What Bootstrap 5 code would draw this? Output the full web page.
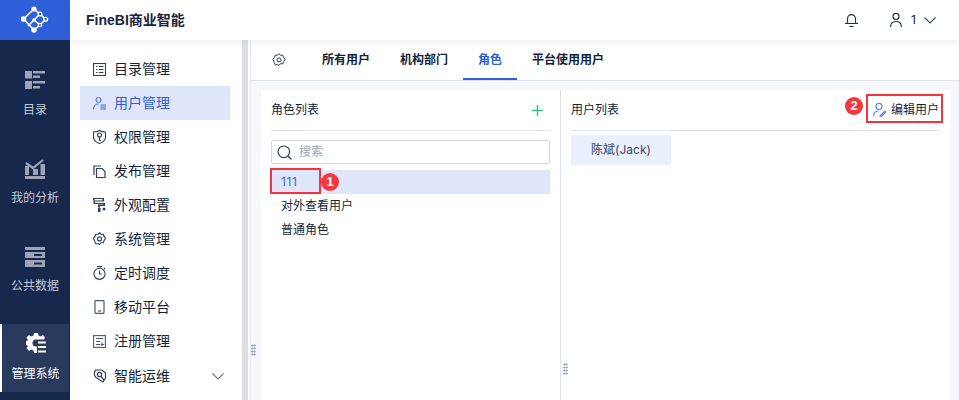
<!doctype html>
<html lang="zh"><head><meta charset="utf-8"><title>FineBI</title>
<link href="https://cdn.jsdelivr.net/npm/bootstrap@5.3.0/dist/css/bootstrap.min.css" rel="stylesheet">
<style>
html,body{height:400px;overflow:hidden}
body{font-family:"Inter","Noto Sans CJK SC",sans-serif;font-size:12px;color:#141f3c;background:#fff;--blue:#2f5fd9}
svg{display:block;flex:none}
.shell{width:959px;height:400px}
.rail{width:70px;background:#17284d;color:#c3c9d6}
.logo-cell{height:40px;background:var(--blue)}
.rail-list{padding-top:20px;gap:20px}
.rail-item{height:68px;gap:11px;padding-top:11px;font-size:12px;line-height:16px}
.rail-glyph{height:20px}
.rail-item.on{background:#2a3a5f;color:#fff;border-left:2px solid #fff;margin-right:1px;padding-top:9px;gap:13px}
.topbar{height:40px;padding-left:16px;padding-right:23px;box-shadow:0 2px 8px rgba(40,50,90,.09);z-index:2;position:relative}
.brand{font-family:"Liberation Sans","Noto Sans CJK SC",sans-serif;font-size:14px;font-weight:700;color:#1a2440}
.bell-gap{margin-left:32px;margin-right:9px}
.bell-shift{margin-right:0}
.side{width:172px;padding:12px 0 0 10px}
.side-item{width:150px;height:34px;padding-left:13px;gap:8px;font-size:14px}
.side-item span{padding-bottom:2px}
.side-item.on{background:#e0e6f9;color:var(--blue)}
.side-last{margin-top:1px}
.chev{margin-left:auto;margin-right:6px}
.scroller{width:6px;margin-right:2px;background:#dddfe6}
.workspace{background:#f6f8fc;border-left:1px solid #e6e8ef}
.grip{width:10px;background:#f6f8fc;position:relative}
.dots{position:absolute;width:5px;height:12px;background-image:radial-gradient(#8a93ab .8px,transparent .9px);background-size:2.5px 3px}
.dots-a{left:0;top:254px}
.dots-b{left:2px;top:273px}
.tabs{height:41px;background:#fff;border-bottom:1px solid #dfe2ec;padding-left:21px}
.tab{height:40px;padding:0 15px;font-size:12px;font-weight:600;line-height:40px}
.tabs svg{margin-right:21px}
.tab.on{color:var(--blue);border-bottom:2px solid var(--blue)}
.panels{padding:9px 9px 0 0}
.pane-a{width:300px;padding:0 10px;position:relative;border-right:1px solid #dfe2ec}
.pane-b{flex:1;padding:0 10px;position:relative}
.pane-head{height:41px;border-bottom:1px solid #dfe2ec;font-size:12px}
.plus{margin-right:7px}
.edit-link{gap:5px;margin-right:1px}
.finder{height:24px;margin-top:9px;border:1px solid #d5d8e2;border-radius:2px;padding-left:5px;gap:7px;color:#a2a6b2;font-size:12px}
.role-list{margin-top:6px}
.role{height:24px;line-height:24px;padding-left:10px;font-size:12px}
.role.on{background:#e0e6f9;color:#4a63d8;letter-spacing:.6px}
.chip{width:100px;height:30px;margin-top:4px;background:#e9f0fb;color:#3c4560;font-size:12px}
.redbox{position:absolute;border:2px solid #f5333f}
.red-a{left:9px;top:78px;width:51px;height:26px}
.red-b{left:305px;top:4px;width:77px;height:29px}
.pin{position:absolute;width:18px;height:18px;border-radius:50%;background:#f4373f;color:#fff;font-size:13px;font-weight:700;line-height:18px;text-align:center;font-family:"Liberation Sans",sans-serif}
.pin-a{left:60px;top:83px}
.pin-b{left:284px;top:7px}
</style></head><body>
<div class="shell d-flex">
 <nav class="rail d-flex flex-column flex-shrink-0">
  <div class="logo-cell d-flex align-items-center justify-content-center">
   <svg width="28" height="28" viewBox="0 0 28 28" fill="none" stroke="#fff" stroke-width="1.600"><path d="M2.500 13 13 3M2.500 13 13 24M13 24 19 19 13 14 7 20M13 3 19 8 24.700 13.300 19 19M13 14 19 8"/><g fill="#fff" stroke="none"><circle cx="2.500" cy="13" r="2.800"/><circle cx="13" cy="3" r="2.600"/><circle cx="13" cy="24" r="2.800"/><circle cx="13" cy="14" r="1.800"/></g><g fill="#2f5fd9" stroke-width="1.300"><circle cx="19" cy="8" r="1.900"/><circle cx="24.700" cy="13.300" r="1.900"/><circle cx="19" cy="19" r="1.700"/></g></svg>
  </div>
  <div class="rail-list d-flex flex-column">
   <div class="rail-item d-flex flex-column align-items-center">
    <div class="rail-glyph"><svg width="20" height="18" viewBox="0 0 20 18" fill="#9ea4b6"><rect width="7" height="7.500"/><rect y="10" width="7" height="8"/><rect x="8" width="12" height="2.500"/><rect x="8" y="4.500" width="7" height="2.500"/><rect x="8" y="10" width="12" height="2.500"/><rect x="8" y="15" width="7" height="2.500"/></svg></div>
    <span>目录</span></div>
   <div class="rail-item d-flex flex-column align-items-center">
    <div class="rail-glyph"><svg width="20" height="20" viewBox="0 0 20 20" fill="#9ea4b6"><rect y="7" width="4" height="9"/><rect x="8" y="10" width="5" height="6"/><rect x="15.500" y="5" width="4.500" height="11"/><rect y="17" width="20" height="3"/><path d="M1 4 8 9 18 1" fill="none" stroke="#9ea4b6" stroke-width="2.200"/></svg></div>
    <span>我的分析</span></div>
   <div class="rail-item d-flex flex-column align-items-center">
    <div class="rail-glyph"><svg width="20" height="20" viewBox="0 0 20 20" fill="#9ea4b6"><rect width="20" height="3"/><path d="M0 5h20v6H0zM9 7v2h8V7zM0 13h20v7H0zM9 15.500v2h8v-2z" fill-rule="evenodd"/></svg></div>
    <span>公共数据</span></div>
   <div class="rail-item on d-flex flex-column align-items-center">
    <div class="rail-glyph"><svg width="20" height="20" viewBox="0 0 20 20" fill="#fff"><path d="M8 0h4l.5 2.500 2.500 1L17 2l2 2.500-1 2H10a3.500 3.500 0 0 0 0 7h1V20H8l-.5-2.500-2.500-1L3 18l-2.500-3 1.500-2L0 12V8l2-.5-1.500-3L3 2l2 1.500 2.500-1z"/><rect x="12" y="8.500" width="8" height="2"/><rect x="12" y="13" width="8" height="2"/><rect x="12" y="17.500" width="8" height="2"/></svg></div>
    <span>管理系统</span></div>
  </div>
 </nav>
 <div class="flex-grow-1 d-flex flex-column">
  <header class="topbar d-flex align-items-center bg-white">
   <span class="brand">FineBI商业智能</span>
   <div class="ms-auto d-flex align-items-center">
    <svg width="13" height="14" viewBox="0 0 13 14" fill="none" stroke="#1d2a48" stroke-width="1.100"><path d="M2 10.500c.6-1 .6-2.500.6-5a3.900 3.900 0 0 1 7.800 0c0 2.500 0 4 .6 5M0 10.500h13M4.500 13.500h4"/></svg>
    <svg class="bell-gap" width="12" height="14" viewBox="0 0 12 14" fill="none" stroke="#1d2a48" stroke-width="1.100"><circle cx="6" cy="3.500" r="3"/><path d="M.6 14c0-4 2.200-5.500 5.400-5.500s5.400 1.500 5.400 5.500"/></svg>
    <span>1</span>
    <svg class="ms-2" width="12" height="7" viewBox="0 0 12 7" fill="none" stroke="#3c4a68" stroke-width="1.200"><path d="M.5.500l5.500 5.500 5.500-5.500"/></svg>
   </div>
  </header>
  <div class="flex-grow-1 d-flex">
   <aside class="side flex-shrink-0 d-flex flex-column">
    <div class="side-item d-flex align-items-center"><svg width="13" height="13" viewBox="0 0 13 13" fill="none" stroke="#2f3d5a" stroke-width="1.100"><rect x=".5" y=".5" width="12" height="12"/><path d="M3 3.500h1.500M6 3.500h4.500M3 6.500h1.500M6 6.500h4.500M3 9.500h1.500M6 9.500h4.500"/></svg><span>目录管理</span></div>
    <div class="side-item on d-flex align-items-center"><svg width="13" height="13" viewBox="0 0 13 13" fill="none" stroke="#3f63dc" stroke-width="1"><circle cx="5.500" cy="3" r="2.500"/><path d="M.5 12.500c0-4 2-5.500 5-5.500M7.500 8H13M7.500 10H13M7.500 12H13"/></svg><span>用户管理</span></div>
    <div class="side-item d-flex align-items-center"><svg width="13" height="14" viewBox="0 0 13 14" fill="none" stroke="#2f3d5a" stroke-width="1.100"><path d="M6.500.5C8 1.500 10 2 12.500 2v5c0 3-3 5.500-6 6.500C3.500 12.500.5 10 .5 7V2C3 2 5 1.500 6.500.5z"/><circle cx="6.500" cy="5" r="2"/><path d="M6.500 7v3.500H8"/></svg><span>权限管理</span></div>
    <div class="side-item d-flex align-items-center"><svg width="13" height="13" viewBox="0 0 13 13" fill="none" stroke="#2f3d5a" stroke-width="1.200"><path d="M1 10V1h7"/><path d="M3.500 3.500H9l3 3v6H3.500z"/></svg><span>发布管理</span></div>
    <div class="side-item d-flex align-items-center"><svg width="13" height="14" viewBox="0 0 13 14" fill="#2f3d5a"><path d="M0 0h11v3.500H2V5h10v3H7v1.500H5V6.500h5.500V6H.5V2H0zM1.500 1v1.500h8V1z" fill-rule="evenodd"/><rect x="5" y="10" width="2.500" height="4"/><circle cx="11" cy="11" r="1.500"/></svg><span>外观配置</span></div>
    <div class="side-item d-flex align-items-center"><svg width="13" height="14" viewBox="0 0 13 14" fill="none" stroke="#2f3d5a" stroke-width="1.100"><path d="M6.500.6 8 2.300l2.300-.1.800 2.200 1.400 2.100-1.400 2.100-.8 2.200-2.300-.1-1.500 1.700L5 11.700l-2.300.1-.8-2.200L.5 6.500l1.400-2.100.8-2.200 2.300.1z"/><circle cx="6.500" cy="6.900" r="2"/></svg><span>系统管理</span></div>
    <div class="side-item d-flex align-items-center"><svg width="13" height="14" viewBox="0 0 13 14" fill="none" stroke="#2f3d5a" stroke-width="1.100"><circle cx="6.500" cy="7.800" r="5.600"/><path d="M4 .6h5M6.500 4.500v3.500h2.300M11 2l1 1"/></svg><span>定时调度</span></div>
    <div class="side-item d-flex align-items-center"><svg width="13" height="14" viewBox="0 0 13 14" fill="none" stroke="#4a5a78" stroke-width="1.200"><rect x="2" y=".6" width="9" height="12.800" rx=".8"/><path d="M5 11h3"/></svg><span>移动平台</span></div>
    <div class="side-item d-flex align-items-center"><svg width="13" height="13" viewBox="0 0 13 13" fill="none" stroke="#4a5a78" stroke-width="1.100"><rect x=".6" y=".6" width="11.800" height="11.800"/><path d="M3 3.500h7M3 6.500h4M3 9.500h4M9 7.500v3.500M7.500 9.500h3.500"/></svg><span>注册管理</span></div>
    <div class="side-item side-last d-flex align-items-center"><svg width="13" height="14" viewBox="0 0 13 14" fill="none" stroke="#2f3d5a" stroke-width="1.200"><path d="M3 1h6l3.500 3v5L10 13 3 8.500C1 7 .5 3 3 1z"/><circle cx="6.500" cy="5.500" r="2.200"/><path d="M8 7.500 11 11"/></svg><span>智能运维</span><svg class="chev" width="12" height="7" viewBox="0 0 12 7" fill="none" stroke="#6d7890" stroke-width="1.100"><path d="M.5.500 6 6l5.500-5.500"/></svg></div>
   </aside>
   <div class="scroller flex-shrink-0"></div>
   <main class="workspace flex-grow-1 d-flex flex-column">
    <div class="tabs d-flex align-items-center flex-shrink-0">
     <svg width="14" height="14" viewBox="0 0 13 14" fill="none" stroke="#2f3d5a" stroke-width="1"><path d="M6.500.6 8 2.300l2.300-.1.800 2.200 1.400 2.100-1.400 2.100-.8 2.200-2.300-.1-1.500 1.700L5 11.700l-2.300.1-.8-2.200L.5 6.500l1.400-2.100.8-2.200 2.300.1z"/><circle cx="6.500" cy="6.900" r="2"/></svg>
     <div class="tab">所有用户</div><div class="tab">机构部门</div><div class="tab on">角色</div><div class="tab">平台使用用户</div>
    </div>
    <div class="panels flex-grow-1 d-flex">
     <div class="grip flex-shrink-0"><span class="dots dots-a"></span></div>
     <section class="pane-a bg-white flex-shrink-0">
      <div class="pane-head d-flex align-items-center justify-content-between"><span>角色列表</span>
       <svg class="plus" width="11" height="11" viewBox="0 0 11 11" stroke="#35c790" stroke-width="1.500"><path d="M5.500 0v11M0 5.500h11"/></svg></div>
      <div class="finder d-flex align-items-center"><svg width="15" height="15" viewBox="0 0 15 15" fill="none" stroke="#2c3a55" stroke-width="1.200"><circle cx="6.800" cy="6.800" r="5.800"/><path d="m11 11 3.500 3.500"/></svg><span>搜索</span></div>
      <div class="role-list">
       <div class="role on">111</div><div class="role">对外查看用户</div><div class="role">普通角色</div>
      </div>
      <div class="redbox red-a"></div>
      <div class="pin pin-a">1</div>
     </section>
     <section class="pane-b bg-white">
      <span class="dots dots-b"></span>
      <div class="pane-head d-flex align-items-center justify-content-between"><span>用户列表</span>
       <span class="d-flex align-items-center edit-link"><svg width="13" height="14" viewBox="0 0 13 14" fill="none" stroke="#5c7ef0" stroke-width="1.100"><circle cx="6" cy="3.500" r="3"/><path d="M.6 13.500C.6 9.500 3 8 5.500 8M7 13l5-5 1 1-5 5H7z"/></svg><span>编辑用户</span></span></div>
      <div class="chip d-flex align-items-center justify-content-center">陈斌(Jack)</div>
      <div class="redbox red-b"></div>
      <div class="pin pin-b">2</div>
     </section>
    </div>
   </main>
  </div>
 </div>
</div>
<script src="https://cdn.jsdelivr.net/npm/bootstrap@5.3.0/dist/js/bootstrap.bundle.min.js"></script>
</body></html>
